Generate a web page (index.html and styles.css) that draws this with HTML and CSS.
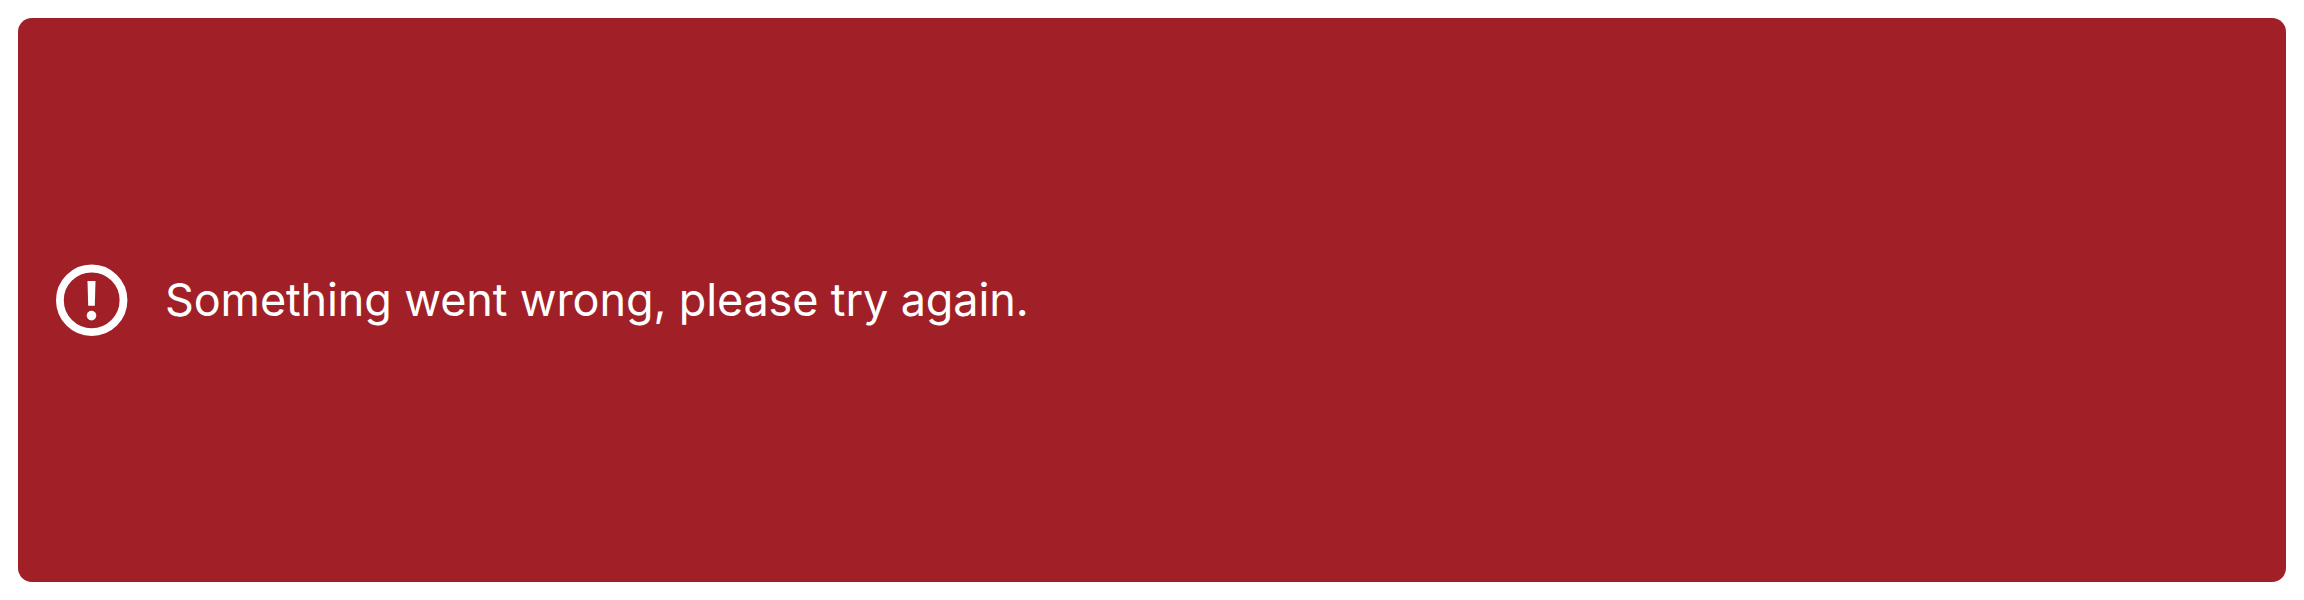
FILE: index.html
```html
<!DOCTYPE html>
<html lang="en">
<head>
<meta charset="utf-8">
<title>Error</title>
<link rel="stylesheet" href="styles.css">
</head>
<body>
<div class="alert" role="alert">
<svg class="alert-icon" viewBox="0 0 72 72" aria-hidden="true">
<circle cx="35.7" cy="36.3" r="31.8" fill="none" stroke="currentColor" stroke-width="7.8"/>
<path fill="currentColor" d="M31.5 17h8l-.7 24.7h-6.6z"/>
<circle cx="35.5" cy="51.6" r="4.8" fill="currentColor"/>
</svg>
<span class="alert-message">Something went wrong, please try again.</span>
</div>
</body>
</html>
```
FILE: styles.css
```css
body {
  margin: 0;
  background: #fff;
  font-family: Inter, sans-serif;
}
.alert {
  box-sizing: border-box;
  height: 564px;
  margin: 18px;
  padding: 0 38px;
  display: flex;
  align-items: center;
  gap: 37px;
  border-radius: 14px;
  background: #a12027;
  color: #fff;
}
.alert-icon {
  width: 72px;
  height: 72px;
  flex: none;
}
.alert-message {
  font-size: 45px;
  line-height: 60px;
  letter-spacing: -0.13px;
  white-space: nowrap;
}
```
